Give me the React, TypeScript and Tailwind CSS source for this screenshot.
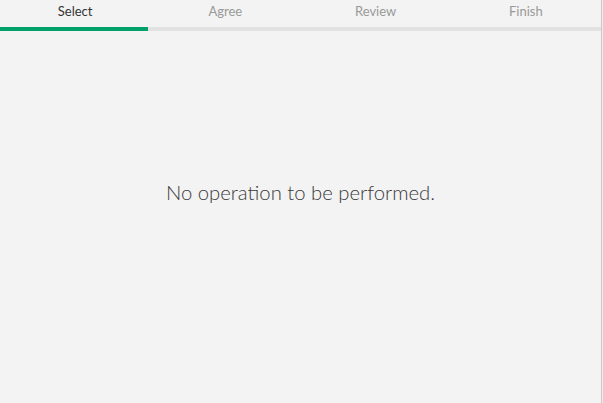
import React from "react";

const steps = ["Select", "Agree", "Review", "Finish"];

export default function App() {
  const active = 0;
  return (
    <div className="h-[403px] w-[603px] flex bg-[#f3f3f3] font-['Lato',sans-serif]">
      <div className="w-[601px] flex flex-col">
        <div className="grid grid-cols-4 bg-[#e2e2e2] pb-[4px] relative">
          {steps.map((s, i) => (
            <div
              key={s}
              className={
                "h-[27px] bg-[#f3f3f3] flex items-center justify-center pb-[4px] text-[13px] " +
                (i === active ? "text-[#333333]" : "text-[#999999]")
              }
            >
              {s}
            </div>
          ))}
          <div className="absolute left-0 bottom-0 h-[4px] w-[148px] bg-[#00a06b]" />
        </div>
        <div className="flex-1 flex items-center justify-center pb-[50px]">
          <p className="text-[20.3px] text-[#3a3a3a] font-light">No operation to be performed.</p>
        </div>
      </div>
      <div className="w-[1px] bg-[#c8c8c8]" />
      <div className="w-[1px] bg-[#ececec]" />
    </div>
  );
}
